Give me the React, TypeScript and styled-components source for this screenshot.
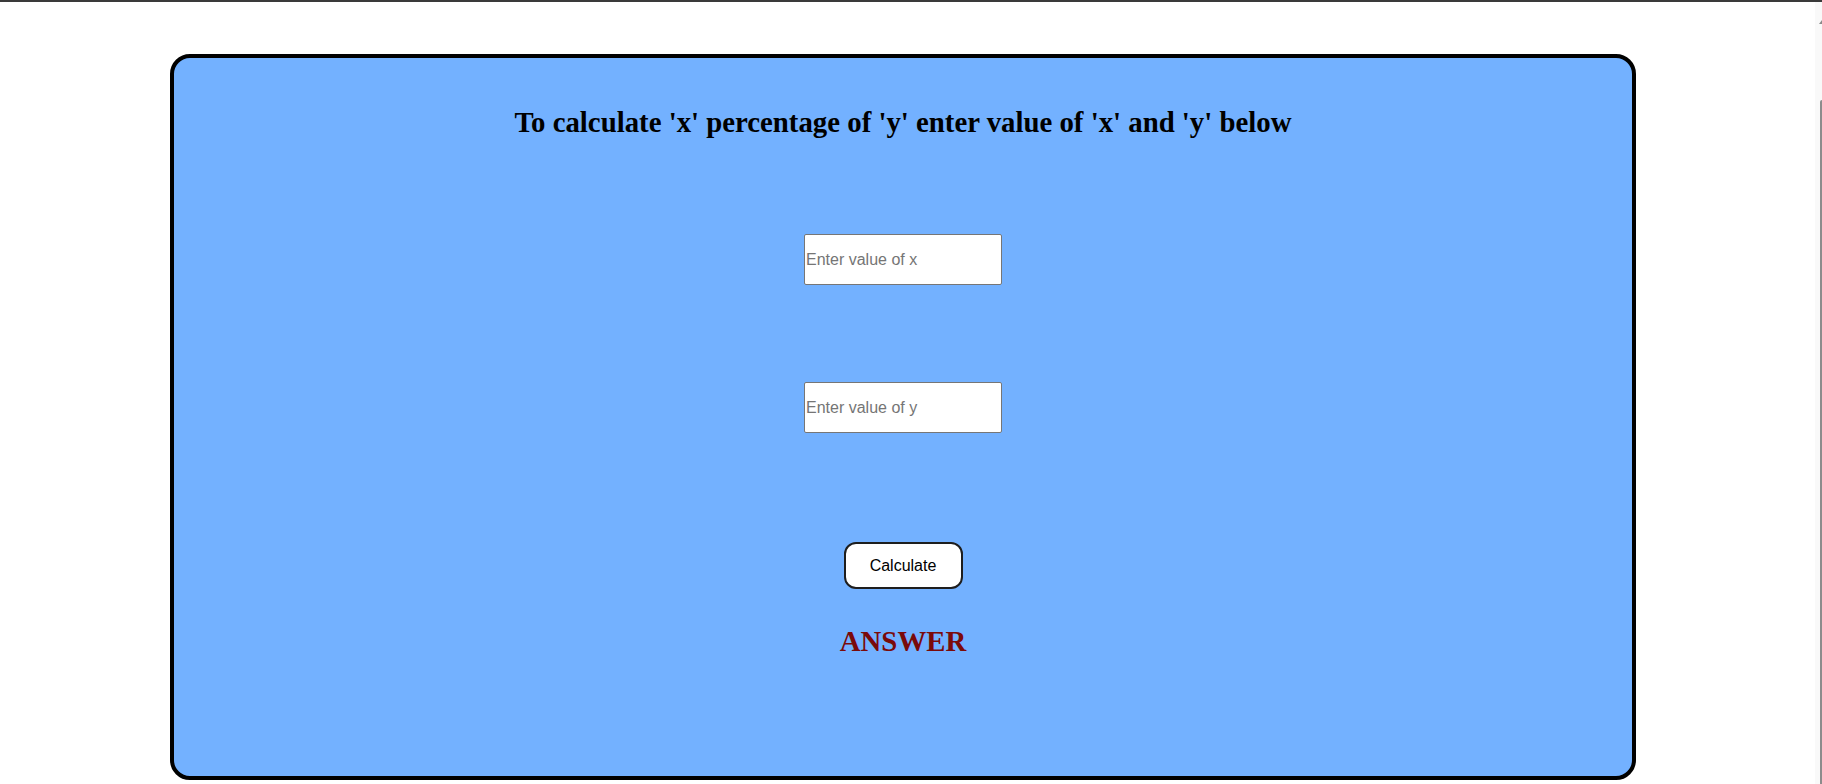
import React from "react";
import styled, { createGlobalStyle } from "styled-components";

const GlobalStyle = createGlobalStyle`
  html, body {
    margin: 0;
    padding: 0;
    background: #ffffff;
    overflow: hidden;
  }
  * { box-sizing: border-box; }
`;

const Page = styled.div`
  display: flex;
  flex-direction: column;
  width: 1822px;
  height: 784px;
`;

const TopRule = styled.div`
  height: 2px;
  background: #3a3a3a;
  flex: none;
`;

const Body = styled.div`
  flex: 1;
  display: flex;
  min-height: 0;
`;

const Main = styled.main`
  flex: 1;
  padding: 52px 0 0 170px;
`;

const ScrollStrip = styled.div`
  width: 7px;
  flex: none;
  background: #f9f9f9;
  display: flex;
  flex-direction: column;
  align-items: flex-end;
`;

const ScrollArrow = styled.div`
  margin-top: 18px;
  margin-right: 0;
  width: 0;
  height: 0;
  border-left: 3px solid transparent;
  border-right: 0 solid transparent;
  border-bottom: 4px solid #8a8a8a;
`;

const ScrollThumb = styled.div`
  margin-top: 76px;
  width: 2px;
  flex: 1;
  background: #8c8c8c;
  border-radius: 2px 0 0 0;
`;

const Card = styled.section`
  width: 1466px;
  height: 726px;
  border: 4px solid #000000;
  border-radius: 20px;
  background: #73b1ff;
  display: flex;
  flex-direction: column;
  align-items: center;
  padding-top: 48px;
`;

const Heading = styled.h2`
  margin: 0;
  font-family: "Liberation Serif", "Times New Roman", serif;
  font-weight: 700;
  font-size: 28.8px;
  line-height: 32px;
  color: #000000;
`;

const NumberInput = styled.input<{ $gap: number }>`
  margin-top: ${(p) => p.$gap}px;
  width: 198px;
  height: 51px;
  border: 1px solid #767676;
  border-radius: 2px;
  background: #ffffff;
  padding: 0 1px;
  font-family: "Liberation Sans", Arial, sans-serif;
  font-size: 16px;
  color: #000000;
  outline: none;

  &::placeholder {
    color: #757575;
  }
`;

const CalcButton = styled.button`
  margin-top: 109px;
  width: 119px;
  height: 47px;
  border: 2px solid #1e1e1e;
  border-radius: 12px;
  background: #ffffff;
  font-family: "Liberation Sans", Arial, sans-serif;
  font-size: 16px;
  color: #000000;
  cursor: pointer;
  padding: 0;
`;

const Answer = styled.h2`
  margin: 36px 0 0;
  font-family: "Liberation Serif", "Times New Roman", serif;
  font-weight: 700;
  font-size: 28.8px;
  line-height: 32px;
  color: #7a0a0a;
`;

export default function App() {
  return (
    <>
      <GlobalStyle />
      <Page>
        <TopRule />
        <Body>
          <Main>
            <Card>
              <Heading>
                To calculate 'x' percentage of 'y' enter value of 'x' and 'y' below
              </Heading>
              <NumberInput $gap={96} type="text" placeholder="Enter value of x" />
              <NumberInput $gap={97} type="text" placeholder="Enter value of y" />
              <CalcButton type="button">Calculate</CalcButton>
              <Answer>ANSWER</Answer>
            </Card>
          </Main>
          <ScrollStrip>
            <ScrollArrow />
            <ScrollThumb />
          </ScrollStrip>
        </Body>
      </Page>
    </>
  );
}
